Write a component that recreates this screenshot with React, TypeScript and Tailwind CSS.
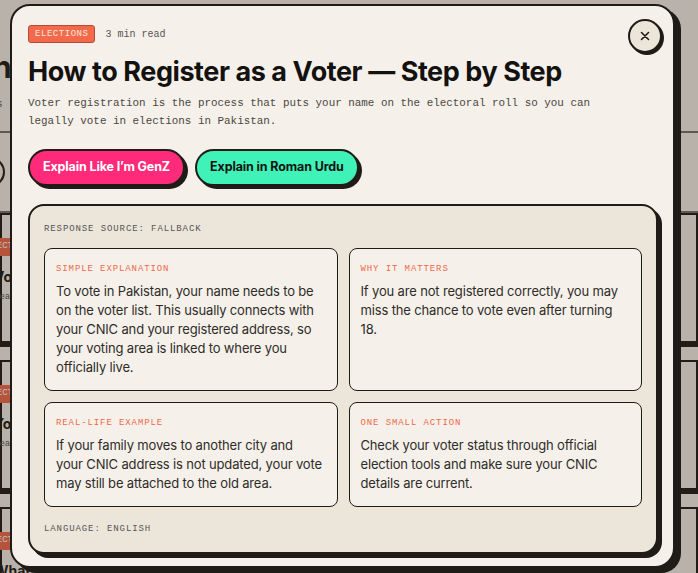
import React from 'react';

const sans = { fontFamily: 'Inter, "Noto Sans", sans-serif' };
const mono = { fontFamily: '"Liberation Mono", "DejaVu Sans Mono", monospace' };

const cards = [
  {
    label: 'Simple Explanation',
    body: 'To vote in Pakistan, your name needs to be on the voter list. This usually connects with your CNIC and your registered address, so your voting area is linked to where you officially live.',
  },
  {
    label: 'Why It Matters',
    body: 'If you are not registered correctly, you may miss the chance to vote even after turning 18.',
  },
  {
    label: 'Real-Life Example',
    body: 'If your family moves to another city and your\u00A0CNIC address is not updated, your vote may still be attached to the old area.',
  },
  {
    label: 'One Small Action',
    body: 'Check your voter status through official election tools and make sure your CNIC details are current.',
  },
];

const BgCard = ({ title }: { title: string }) => (
  <div className="h-[130px] border-2 border-[#1f1b16] bg-[#f5f1ea] shadow-[0_4px_0_#1f1b16] pt-[15px]">
    <span style={mono} className="inline-block bg-[#f26a4b] text-white text-[9px] px-1 py-[2px] -ml-[20px]">
      ELECTIONS
    </span>
    <div style={sans} className="text-[14px] font-bold mt-[10px] -ml-[8px] text-[#1f1b16]">{title}</div>
    <div style={mono} className="text-[9px] text-[#555] mt-1 -ml-[8px]">read more</div>
  </div>
);

export default function App() {
  return (
    <div className="relative h-[573px] w-[698px] overflow-hidden bg-[#f5f1ea]">
      {/* page behind the modal */}
      <div className="flex flex-col">
        <div className="h-[133px] border-b-2 border-[#1f1b16]/60 pt-[52px]">
          <div style={sans} className="text-[30px] font-bold text-[#1f1b16] -ml-[7px] leading-none">n</div>
          <div style={mono} className="text-[11px] text-[#555] mt-[14px] -ml-[4px]">s</div>
        </div>
        <div className="h-[80px] border-b-2 border-[#1f1b16]/60 flex items-center">
          <div className="w-[30px] h-[30px] rounded-full border-2 border-[#1f1b16] -ml-[25px]" />
        </div>
        <div className="flex flex-col gap-[17px]">
          <BgCard title="Voter ID" />
          <BgCard title="Your vote" />
          <BgCard title="What" />
        </div>
      </div>

      {/* overlay */}
      <div className="absolute inset-0 bg-[#2a2118]/30 pl-[10px] pt-[4px]">
        <div className="relative w-[665px] h-[564px] rounded-[20px] border-2 border-[#1f1b16] bg-[#f5f1ea] shadow-[6px_5px_0_#1f1b16] pl-[16px] pr-[15px] pt-[19px]">
          <button className="absolute right-[11px] top-[13px] w-[34px] h-[34px] rounded-full border-2 border-[#1f1b16] bg-[#ece6da] shadow-[2px_2px_0_#1f1b16] flex items-center justify-center text-[#1f1b16]">
            <svg width="10" height="10" viewBox="0 0 10 10" fill="none" stroke="currentColor" strokeWidth="1.6" strokeLinecap="round">
              <path d="M1.5 1.5l7 7M8.5 1.5l-7 7" />
            </svg>
          </button>

          <div className="flex items-center gap-[10px]">
            <span style={mono} className="rounded-[3px] border border-[#b94a2f] bg-[#f26a4b] px-[6px] py-[2px] text-[9px] tracking-[0.06em] text-[#fde6dc] leading-[12px]">
              ELECTIONS
            </span>
            <span style={mono} className="text-[10px] text-[#555]">3 min read</span>
          </div>

          <h1 style={sans} className="mt-[13px] text-[27px] leading-[32px] font-bold tracking-[-0.016em] text-[#141210]">
            How to Register as a Voter — Step by Step
          </h1>

          <p style={mono} className="mt-[6px] text-[10.9px] leading-[18px] text-[#4a4742] pr-[60px]">
            Voter registration is the process that puts your name on the electoral roll so you can legally vote in elections in Pakistan.
          </p>

          <div className="mt-[19px] flex gap-[10px]">
            <button style={sans} className="h-[37px] px-[13px] rounded-full border-2 border-[#1f1b16] bg-[#ff2a7a] text-white text-[12.5px] tracking-[-0.01em] font-bold shadow-[3px_3px_0_#1f1b16]">
              Explain Like I’m GenZ
            </button>
            <button style={sans} className="h-[37px] px-[13px] rounded-full border-2 border-[#1f1b16] bg-[#3ef2b8] text-[#141210] text-[12.5px] tracking-[-0.01em] font-bold shadow-[3px_3px_0_#1f1b16]">
              Explain in Roman Urdu
            </button>
          </div>

          <div className="mt-[18px] rounded-[16px] border-2 border-[#1f1b16] bg-[#ece6da] shadow-[4px_4px_0_#1f1b16] px-[14px] pt-[17px] pb-[17px]">
            <div style={mono} className="text-[9px] tracking-[0.1em] text-[#555] leading-[12px]">
              RESPONSE SOURCE: FALLBACK
            </div>
            <div className="mt-[13px] grid grid-cols-2 gap-[11px]">
              {cards.map((c) => (
                <div key={c.label} className="rounded-[8px] border-[1.5px] border-[#1f1b16] bg-[#f5f1ea] pl-[11px] pr-[12px] pt-[14px] pb-[13px]">
                  <div style={mono} className="text-[9px] uppercase tracking-[0.1em] text-[#f0674a] leading-[12px]">
                    {c.label}
                  </div>
                  <p style={sans} className="mt-[7px] text-[13px] leading-[19px] tracking-[-0.012em] text-[#2f2c28]">
                    {c.body}
                  </p>
                </div>
              ))}
            </div>
            <div style={mono} className="mt-[16px] text-[9px] tracking-[0.1em] text-[#555] leading-[12px]">
              LANGUAGE: ENGLISH
            </div>
          </div>
        </div>
      </div>
    </div>
  );
}
